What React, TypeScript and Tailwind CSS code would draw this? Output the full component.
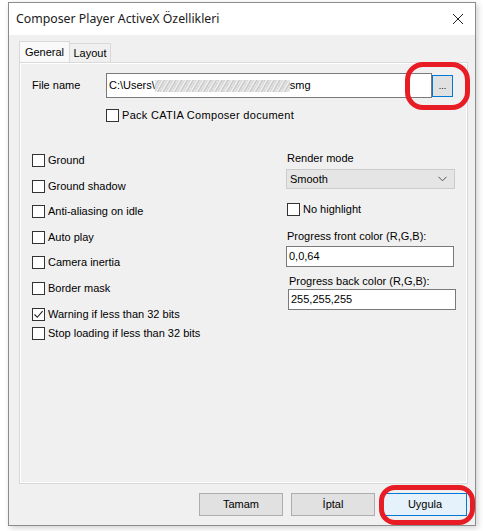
import React from "react";

function Box({ checked = false }: { checked?: boolean }) {
  return (
    <span className="relative flex h-[13px] w-[13px] shrink-0 items-center justify-center border border-[#333333] bg-white">
      {checked && (
        <svg width="11" height="11" viewBox="0 0 11 11" fill="none">
          <path d="M1.5 5.5 L4.3 8.3 L9.6 2.2" stroke="#222" strokeWidth="1.1" />
        </svg>
      )}
    </span>
  );
}

function Check({ label, checked, wide }: { label: string; checked?: boolean; wide?: boolean }) {
  return (
    <div className="flex h-[13px] items-center gap-[3px]">
      <Box checked={checked} />
      <span className={"leading-[13px] " + (wide ? "tracking-[0.3px]" : "")}>{label}</span>
    </div>
  );
}

function Btn({ label, active }: { label: string; active?: boolean }) {
  return (
    <button
      className={
        "flex h-[23px] w-[84px] items-center justify-center border text-[11px] " +
        (active ? "border-[#0078d7] bg-[#e5f1fb]" : "border-[#adadad] bg-[#e1e1e1]")
      }
    >
      {label}
    </button>
  );
}

export default function App() {
  const leftChecks = [
    "Ground",
    "Ground shadow",
    "Anti-aliasing on idle",
    "Auto play",
    "Camera inertia",
    "Border mask",
  ];

  return (
    <div
      className="relative h-[531px] w-[483px] overflow-hidden bg-white pl-[8px] pt-[2px] text-[11px] text-black"
      style={{ fontFamily: '"Liberation Sans", Arial, sans-serif' }}
    >
      {/* window */}
      <div className="flex h-[524px] w-[468px] flex-col border border-[#8c8c8c] bg-[#f0f0f0] shadow-[2px_2px_6px_rgba(0,0,0,0.18)]">
        {/* title bar */}
        <div className="flex h-[32px] items-center justify-between bg-white pl-[7px] pr-[11px]">
          <span
            className="text-[12.3px] text-[#1a1a1a]"
            style={{ fontFamily: '"Noto Sans", "Open Sans", sans-serif' }}
          >
            Composer Player ActiveX Özellikleri
          </span>
          <svg width="12" height="12" viewBox="0 0 12 12">
            <path d="M1 1 L11 11 M11 1 L1 11" stroke="#222" strokeWidth="1" />
          </svg>
        </div>

        {/* tabs */}
        <div className="ml-[10px] mt-[6px] flex items-end">
          <div className="flex h-[21px] w-[51px] items-center justify-center border border-b-0 border-[#d9d9d9] bg-[#f9f9f9]">
            General
          </div>
          <div className="flex h-[19px] w-[41px] items-center justify-center border border-b-0 border-l-0 border-[#d9d9d9] bg-[#f0f0f0]">
            Layout
          </div>
        </div>

        {/* panel */}
        <div className="ml-[10px] h-[422px] w-[449px] border border-[#d9d9d9] bg-[#f0f0f0] pt-[10px] shadow-[inset_1px_1px_0_#ffffff,inset_-1px_-1px_0_#ffffff]">
          <div className="flex items-center">
            <span className="w-[86px] pl-[12px]">File name</span>
            <div className="flex h-[25px] w-[326px] items-center border border-[#7a7a7a] bg-white pl-[2px]">
              <span>C:\Users\</span>
              <span className="h-[12px] w-[135px] bg-[repeating-linear-gradient(120deg,#cfcfcf_0px,#f4f4f4_2px,#c4c4c4_3px,#ececec_5px)] blur-[0.7px]" />
              <span>smg</span>
            </div>
            <div className="flex h-[22px] w-[21px] items-center justify-center border border-[#0078d7] bg-[#e1e1e1] text-[9px] leading-[10px]">
              ...
            </div>
          </div>

          <div className="ml-[86px] mt-[11px]">
            <Check label="Pack CATIA Composer document" wide />
          </div>

          <div className="mt-[30px] flex">
            <div className="ml-[12px] mt-[2px] flex w-[254px] flex-col">
              <div className="flex flex-col gap-[12.6px]">
                {leftChecks.map((l) => (
                  <Check key={l} label={l} />
                ))}
                <Check label="Warning if less than 32 bits" checked />
              </div>
              <div className="mt-[6.5px]">
                <Check label="Stop loading if less than 32 bits" />
              </div>
            </div>

            <div className="flex flex-col">
              <span className="pl-[1px] leading-[13px]">Render mode</span>
              <div className="mt-[4px] flex h-[20px] w-[169px] items-center justify-between border border-[#cccccc] bg-[#e5e5e5] pl-[3px] pr-[7px]">
                <span>Smooth</span>
                <svg width="9" height="6" viewBox="0 0 9 6">
                  <path d="M0.5 0.8 L4.5 4.8 L8.5 0.8" stroke="#555" strokeWidth="1" fill="none" />
                </svg>
              </div>
              <div className="ml-[1px] mt-[14px]">
                <Check label="No highlight" />
              </div>
              <span className="mt-[14px] pl-[1px] leading-[13px]">Progress front color (R,G,B):</span>
              <div className="mt-[3px] flex h-[21px] w-[168px] items-center border border-[#7a7a7a] bg-white pl-[2px]">
                0,0,64
              </div>
              <span className="ml-[3px] mt-[8px] leading-[13px]">Progress back color (R,G,B):</span>
              <div className="ml-[2px] mt-[1px] flex h-[21px] w-[168px] items-center border border-[#7a7a7a] bg-white pl-[2px]">
                255,255,255
              </div>
            </div>
          </div>
        </div>

        {/* buttons */}
        <div className="mr-[8px] mt-[9px] flex justify-end gap-[8px]">
          <Btn label="Tamam" />
          <Btn label="İptal" />
          <Btn label="Uygula" active />
        </div>
      </div>

      {/* red annotations */}
      <div className="absolute left-[405px] top-[62px] h-[48px] w-[65px] rounded-[18px] border-[5px] border-[#e81c24]" />
      <div className="absolute left-[379px] top-[485px] h-[40px] w-[96px] rounded-[16px] border-[5px] border-[#e81c24]" />
    </div>
  );
}
